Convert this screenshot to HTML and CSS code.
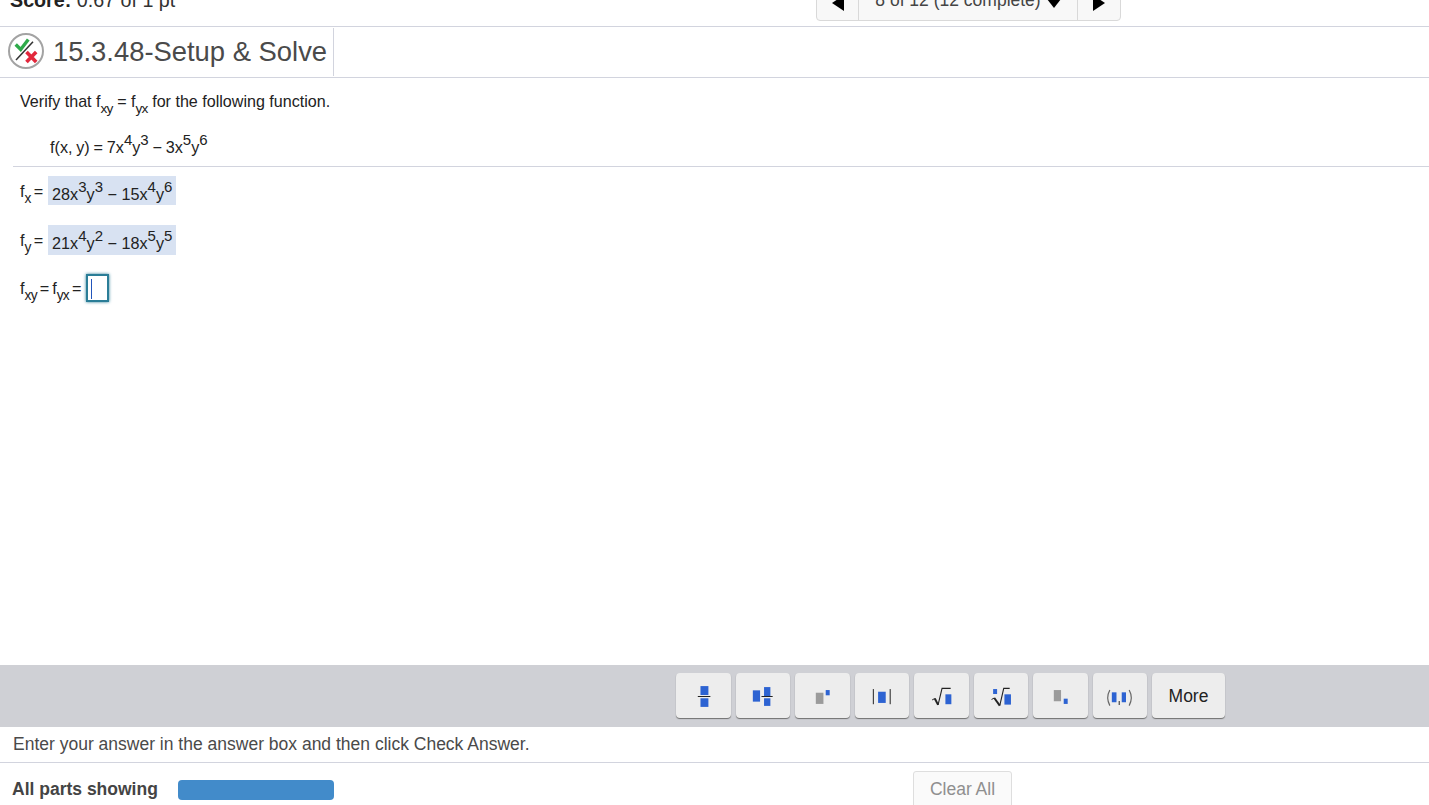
FILE: index.html
```html
<!DOCTYPE html>
<html lang="en">
<head>
<meta charset="utf-8">
<title>15.3.48-Setup &amp; Solve</title>
<link rel="stylesheet" href="styles.css">
</head>
<body>
<div class="page">
  <header class="topbar">
    <div class="score"><b>Score:</b> 0.67 of 1 pt</div>
    <nav class="pager">
      <div class="pager-btn prev"><svg width="14" height="16" viewBox="0 0 14 16"><path d="M13 0V16L1 8Z"/></svg></div>
      <div class="pager-mid"><span>8 of 12 (12 complete)</span><svg width="14" height="9" viewBox="0 0 14 9"><path d="M0 0H14L7 9Z"/></svg></div>
      <div class="pager-btn next"><svg width="14" height="16" viewBox="0 0 14 16"><path d="M1 0V16L13 8Z"/></svg></div>
    </nav>
  </header>

  <div class="titlebar">
    <div class="title">
      <svg class="status" width="36" height="36" viewBox="0 0 36 36">
        <circle cx="18" cy="18" r="17" fill="#fff" stroke="#a3a3a3" stroke-width="2"/>
        <path d="M8 27L25 8.7" stroke="#333" stroke-width="1.5"/>
        <path d="M7.7 11.5L12.7 16.5L20.3 6.5" fill="none" stroke="#2eaa4a" stroke-width="3.4"/>
        <path d="M18.5 19L28.2 29M28.2 19L18.5 29" stroke="#e2283c" stroke-width="3.6"/>
      </svg>
      <h1>15.3.48-Setup &amp; Solve</h1>
    </div>
  </div>

  <main class="question">
    <p class="prompt">Verify that f<sub>xy</sub> = f<sub>yx</sub> for the following function.</p>
    <p class="given">f(x, y) = 7x<sup>4</sup>y<sup>3</sup> − 3x<sup>5</sup>y<sup>6</sup></p>
    <div class="answers">
      <div class="answer"><span class="label">f<sub>x</sub> =</span><span class="filled">28x<sup>3</sup>y<sup>3</sup> − 15x<sup>4</sup>y<sup>6</sup></span></div>
      <div class="answer second"><span class="label">f<sub>y</sub> =</span><span class="filled">21x<sup>4</sup>y<sup>2</sup> − 18x<sup>5</sup>y<sup>5</sup></span></div>
      <div class="answer last"><span class="label">f<sub>xy</sub> = f<sub>yx</sub> =</span><span class="input"><i class="caret"></i></span></div>
    </div>
  </main>

  <div class="toolbar">
    <button class="tool"><svg viewBox="0 0 55 45"><rect x="24.7" y="13" width="8" height="9" class="b"/><rect x="24.7" y="25.3" width="8" height="8.7" class="b"/><rect x="22" y="23" width="12.7" height="1" class="k"/></svg></button>
    <button class="tool"><svg viewBox="0 0 55 45"><rect x="17" y="17.3" width="7.3" height="11.4" class="b"/><rect x="28.3" y="14" width="6.4" height="9" class="b"/><rect x="28.3" y="25.3" width="6.4" height="7.7" class="b"/><rect x="25.7" y="23" width="11.3" height="1" class="k"/></svg></button>
    <button class="tool"><svg viewBox="0 0 55 45"><rect x="21" y="19.7" width="7.7" height="11.3" class="g"/><rect x="31" y="17" width="4" height="5.3" class="b"/></svg></button>
    <button class="tool"><svg viewBox="0 0 55 45"><rect x="23.3" y="18.7" width="7.7" height="11.3" class="b"/><rect x="18" y="16" width="1" height="15.3" class="k"/><rect x="35" y="16" width="1" height="15.3" class="k"/></svg></button>
    <button class="tool"><svg viewBox="0 0 55 45"><path d="M18.3 27L21 25.5" fill="none" stroke="#222" stroke-width="1"/><path d="M21 25.5L24.3 32" fill="none" stroke="#222" stroke-width="2"/><path d="M24.3 32L28.3 15.300H37" fill="none" stroke="#222" stroke-width="1.100"/><rect x="31.7" y="21.300" width="6" height="10" class="b"/></svg></button>
    <button class="tool"><svg viewBox="0 0 55 45"><rect x="19.3" y="16" width="4" height="5" class="b"/><path d="M17.700 26.500L20.500 25" fill="none" stroke="#222" stroke-width="1"/><path d="M20.500 25L26 32.700" fill="none" stroke="#222" stroke-width="2"/><path d="M26 32.700L30 15.300H36" fill="none" stroke="#222" stroke-width="1.100"/><rect x="30.700" y="21.300" width="6.600" height="10.400" class="b"/></svg></button>
    <button class="tool"><svg viewBox="0 0 55 45"><rect x="21" y="17" width="7.3" height="11.3" class="g"/><rect x="31" y="25.7" width="4" height="5.3" class="b"/></svg></button>
    <button class="tool"><svg viewBox="0 0 55 45"><path d="M17 17Q12.7 24.800 17 32.700M36.500 17Q40.800 24.800 36.500 32.700" fill="none" stroke="#666" stroke-width="1.200"/><rect x="19" y="19.300" width="4.700" height="10" class="b"/><rect x="29" y="19.300" width="4.300" height="10" class="b"/><path d="M26.500 28V32" stroke="#555" stroke-width="1.300"/></svg></button>
    <button class="tool more">More</button>
  </div>

  <p class="instruction">Enter your answer in the answer box and then click Check Answer.</p>

  <footer class="footer">
    <strong class="parts">All parts showing</strong>
    <div class="progress"></div>
    <button class="clear">Clear All</button>
  </footer>
</div>
</body>
</html>
```

FILE: styles.css
```css
* { box-sizing: border-box; }
html, body { margin: 0; height: 100%; overflow: hidden; background: #fff; }
body { font-family: "Liberation Sans", Arial, sans-serif; color: #222; }
.page { display: flex; flex-direction: column; height: 805px; overflow: hidden; }

.topbar { flex: 0 0 27px; display: flex; align-items: flex-end; border-bottom: 1px solid #d2d4de; padding-left: 10px; overflow: hidden; }
.score { font-size: 19.7px; line-height: 22px; color: #333; margin-bottom: 15px; width: 806px; flex: none; }
.score b { color: #222; }
.pager { display: flex; height: 32px; width: 305px; margin-bottom: 5px; border: 1px solid #d9d9d9; border-radius: 0 0 4px 4px; background: #f8f8f8; flex: none; }
.pager-btn { width: 41px; flex: none; display: flex; align-items: flex-end; justify-content: center; padding-bottom: 9px; }
.pager-btn.next { width: 43px; border-left: 1px solid #d9d9d9; }
.pager-btn svg { width: 14px; height: 16px; }
.pager-mid { flex: 1; border-left: 1px solid #d9d9d9; display: flex; align-items: flex-end; justify-content: center; gap: 6px; font-size: 17.5px; color: #444; padding-bottom: 9px; line-height: 22px; }
.pager-mid svg { flex: none; margin-bottom: 3px; }

.titlebar { flex: 0 0 51px; border-bottom: 1px solid #d2d4de; display: flex; align-items: flex-start; }
.title { display: flex; align-items: center; gap: 9px; height: 48px; padding: 0 6px 0 8px; margin-top: 1px; border-right: 1px solid #d2d4de; }
.status { flex: none; display: block; width: 36px; height: 36px; margin-top: -2px; }
h1 { margin: 0; font-size: 27.4px; font-weight: 400; color: #4a4a4a; line-height: 48px; white-space: nowrap; }

.question { flex: 1; min-height: 0; font-size: 16.2px; line-height: 20px; color: #222; }
.question p { margin: 0; }
sub, sup { line-height: 0; }
sub { font-size: 0.85em; vertical-align: -0.42em; letter-spacing: -0.75px; }
sup { font-size: 15px; vertical-align: 8px; }
.prompt { padding: 13px 0 0 20px; font-size: 16.1px; }
.given { padding: 26px 0 0 50px; height: 55px; word-spacing: -0.7px; white-space: nowrap; }
.answers { margin: 0 0 0 13px; border-top: 1px solid #d2d4de; padding: 9px 0 0 7px; display: flex; flex-direction: column; }
.answer { display: flex; align-items: center; height: 29px; margin-bottom: 20px; }
.answer.second { height: 30px; margin-bottom: 18px; }
.answer.last { margin-bottom: 0; }
.label { margin-right: 5px; word-spacing: -1.5px; white-space: nowrap; }
.filled { display: block; width: 128px; height: 100%; padding: 5px 0 0 4px; background: #d8e2f2; line-height: 26px; white-space: nowrap; }
.input { display: block; width: 23px; height: 28px; border: 2px solid #2a7d97; box-shadow: 0 0 3px #2a7d97; background: #fff; padding: 3px 0 0 3px; }
.caret { display: block; width: 1px; height: 20px; background: #2255bb; }

.toolbar { flex: 0 0 62px; background: #cfd0d5; display: flex; justify-content: flex-end; align-items: flex-start; gap: 5px; padding: 8px 204px 0 0; }
.tool { width: 54.5px; height: 45px; padding: 0; border: 0; border-radius: 4px; background: #ededed; box-shadow: 0 1px 1px #6f6f6f; }
.tool svg { display: block; width: 100%; height: 100%; }
.b { fill: #2d63d2; }
.g { fill: #9b9b9b; }
.k { fill: #222; }
.more { width: 73px; padding-top: 1px; font: 17.5px "Liberation Sans", Arial, sans-serif; color: #222; }

.instruction { flex: 0 0 36px; margin: 0; padding: 7px 0 0 13px; font-size: 17.5px; line-height: 21px; color: #4a4a4a; border-bottom: 1px solid #d2d4de; }

.footer { flex: 0 0 42px; display: flex; align-items: flex-start; padding-left: 12px; margin-bottom: -6px; }
.parts { width: 166px; margin-top: 16px; font-size: 17.5px; line-height: 21px; color: #444; }
.progress { width: 156px; height: 20px; margin-top: 17px; background: #428bca; border-radius: 4px; }
.clear { margin: 8px 0 0 579px; width: 99px; height: 40px; padding: 0 0 4px; border: 1px solid #dedede; border-radius: 3px; background: #fafafa; font: 17.5px "Liberation Sans", Arial, sans-serif; color: #8f8f8f; }
```
